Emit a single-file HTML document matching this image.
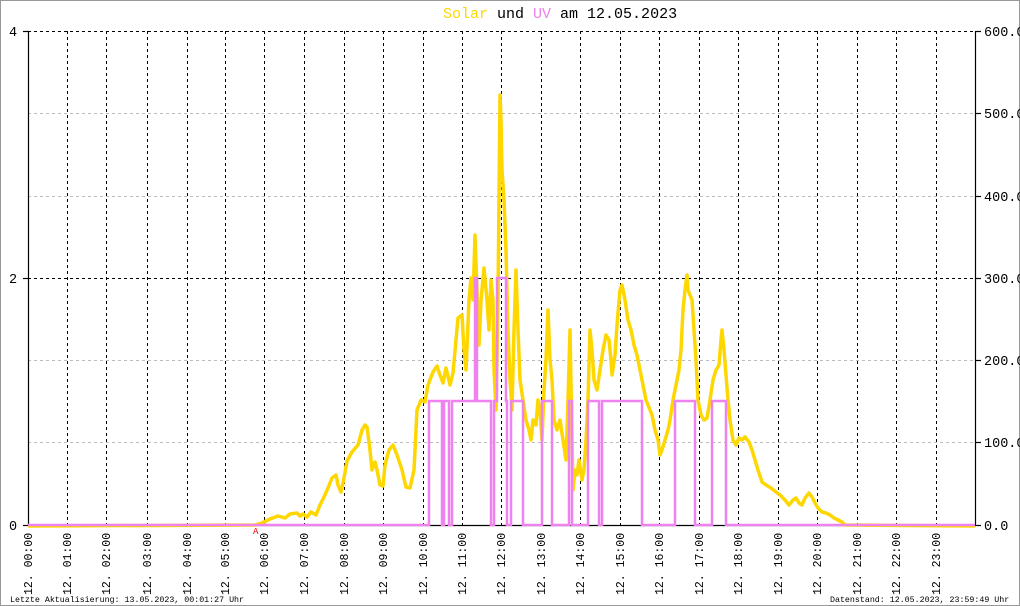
<!DOCTYPE html>
<html><head><meta charset="utf-8"><style>
html,body{margin:0;padding:0;background:#fff;}
svg{display:block;font-family:"Liberation Mono",monospace;}
</style></head><body>
<svg width="1020" height="606" viewBox="0 0 1020 606" xmlns="http://www.w3.org/2000/svg">
<rect x="0.5" y="0.5" width="1019" height="605" fill="#fff" stroke="#999" stroke-width="1"/>
<g stroke="#bbb" stroke-dasharray="3,3" stroke-width="1">
<line x1="28" y1="113.5" x2="975" y2="113.5"/><line x1="28" y1="196.5" x2="975" y2="196.5"/>
<line x1="28" y1="360.5" x2="975" y2="360.5"/><line x1="28" y1="442.5" x2="975" y2="442.5"/>
</g>
<g stroke="#000" stroke-dasharray="3,3" stroke-width="1">
<line x1="28" y1="31.5" x2="975" y2="31.5"/><line x1="28" y1="278.5" x2="975" y2="278.5"/>
<line x1="67.5" y1="31" x2="67.5" y2="525"/><line x1="106.5" y1="31" x2="106.5" y2="525"/><line x1="147.5" y1="31" x2="147.5" y2="525"/><line x1="187.5" y1="31" x2="187.5" y2="525"/><line x1="225.5" y1="31" x2="225.5" y2="525"/><line x1="264.5" y1="31" x2="264.5" y2="525"/><line x1="304.5" y1="31" x2="304.5" y2="525"/><line x1="344.5" y1="31" x2="344.5" y2="525"/><line x1="383.5" y1="31" x2="383.5" y2="525"/><line x1="423.5" y1="31" x2="423.5" y2="525"/><line x1="462.5" y1="31" x2="462.5" y2="525"/><line x1="501.5" y1="31" x2="501.5" y2="525"/><line x1="541.5" y1="31" x2="541.5" y2="525"/><line x1="580.5" y1="31" x2="580.5" y2="525"/><line x1="620.5" y1="31" x2="620.5" y2="525"/><line x1="659.5" y1="31" x2="659.5" y2="525"/><line x1="699.5" y1="31" x2="699.5" y2="525"/><line x1="738.5" y1="31" x2="738.5" y2="525"/><line x1="778.5" y1="31" x2="778.5" y2="525"/><line x1="817.5" y1="31" x2="817.5" y2="525"/><line x1="857.5" y1="31" x2="857.5" y2="525"/><line x1="896.5" y1="31" x2="896.5" y2="525"/><line x1="936.5" y1="31" x2="936.5" y2="525"/>
</g>
<g stroke="#000" stroke-width="1.2">
<line x1="28.5" y1="31" x2="28.5" y2="526"/><line x1="975.5" y1="31" x2="975.5" y2="526"/><line x1="28" y1="525.5" x2="976" y2="525.5"/>
<line x1="23" y1="31.5" x2="29" y2="31.5"/><line x1="23" y1="278.5" x2="29" y2="278.5"/><line x1="23" y1="525.5" x2="29" y2="525.5"/>
<line x1="975" y1="31.5" x2="981" y2="31.5"/><line x1="975" y1="113.5" x2="981" y2="113.5"/><line x1="975" y1="196.5" x2="981" y2="196.5"/><line x1="975" y1="278.5" x2="981" y2="278.5"/><line x1="975" y1="360.5" x2="981" y2="360.5"/><line x1="975" y1="442.5" x2="981" y2="442.5"/><line x1="975" y1="525.5" x2="981" y2="525.5"/>
</g>
<polyline fill="none" stroke="#FFD700" stroke-width="3.5" stroke-linejoin="round" points="28,526 255,525 262,523 270,519 278,516 285,518 290,514 297,513 300,516 303,514 307,517 311,512 316,515 320,505 324,497 328,488 332,478 336,475 338,485 341,492 344,478 347,461 352,452 358,445 362,430 365,425 367,427 370,450 372,470 375,462 377,470 380,485 383,486 385,465 389,450 393,445 397,455 402,470 406,487 410,488 414,470 417,410 421,400 425,402 428,385 433,372 437,366 440,375 443,383 446,368 450,385 453,373 456,340 458,318 462,315 464,350 466,370 469,300 471,278 473,300 475,235 477,290 479,345 481,300 484,268 487,300 489,330 491,280 493,300 494,370 496,410 498,300 500,95 501,120 502,170 504,200 506,250 508,330 510,380 512,410 514,330 516,270 518,330 520,380 523,400 526,420 529,430 531,440 533,420 536,425 538,400 540,410 542,440 544,390 546,360 548,310 550,360 552,380 554,420 557,430 560,420 563,440 566,460 568,400 570,330 572,440 573,490 575,470 577,475 579,460 582,480 584,470 586,440 588,400 590,330 592,350 594,380 597,390 600,370 603,350 606,335 609,340 611,360 612,375 615,355 617,325 620,290 622,285 625,300 628,320 631,330 634,345 637,355 640,370 643,385 646,400 648,405 650,410 652,415 655,430 658,440 660,455 662,450 665,440 668,430 670,420 673,400 676,385 679,370 681,350 683,310 685,290 687,275 688,290 690,295 692,300 694,330 696,360 698,400 701,415 704,420 707,418 710,400 713,380 716,370 719,365 721,340 722,330 724,350 726,375 728,400 730,420 733,440 736,445 739,438 742,440 745,437 749,442 752,450 755,460 758,470 762,482 766,485 771,488 776,492 780,495 785,500 789,505 793,500 796,498 799,503 802,505 805,498 809,493 812,497 815,503 818,508 822,512 826,513 830,515 834,518 838,520 842,522 845,525 975,526"/>
<polyline fill="none" stroke="#EE82EE" stroke-width="2.5" points="28,525 429,525 429,401 442,401 442,525 444,525 444,401 449,401 449,525 452,525 452,401 475,401 475,278 477,278 477,401 491,401 491,525 494,525 494,401 497,401 497,278 506,278 506,401 507,401 507,525 511,525 511,401 523,401 523,525 542,525 542,401 552,401 552,525 569,525 569,401 572,401 572,525 588,525 588,401 599,401 599,525 602,525 602,401 642,401 642,525 675,525 675,401 695,401 695,525 712,525 712,401 726,401 726,525 975,525"/>
<text x="253" y="534" fill="#e00" font-size="9">A</text>
<g font-size="13.5" fill="#000">
<text x="9" y="36">4</text><text x="9" y="283">2</text><text x="9" y="530">0</text>
<text x="984" y="36">600.0</text><text x="984" y="118">500.0</text><text x="984" y="201">400.0</text><text x="984" y="283">300.0</text><text x="984" y="365">200.0</text><text x="984" y="447">100.0</text><text x="984" y="530">0.0</text>
</g>
<text x="443" y="18" font-size="15" fill="#000"><tspan fill="#FFD700">Solar</tspan> und <tspan fill="#EE82EE">UV</tspan> am 12.05.2023</text>
<g font-size="11.5" fill="#000">
<text transform="translate(32,595) rotate(-90)">12. 00:00</text><text transform="translate(71,595) rotate(-90)">12. 01:00</text><text transform="translate(110,595) rotate(-90)">12. 02:00</text><text transform="translate(151,595) rotate(-90)">12. 03:00</text><text transform="translate(191,595) rotate(-90)">12. 04:00</text><text transform="translate(229,595) rotate(-90)">12. 05:00</text><text transform="translate(268,595) rotate(-90)">12. 06:00</text><text transform="translate(308,595) rotate(-90)">12. 07:00</text><text transform="translate(348,595) rotate(-90)">12. 08:00</text><text transform="translate(387,595) rotate(-90)">12. 09:00</text><text transform="translate(427,595) rotate(-90)">12. 10:00</text><text transform="translate(466,595) rotate(-90)">12. 11:00</text><text transform="translate(505,595) rotate(-90)">12. 12:00</text><text transform="translate(545,595) rotate(-90)">12. 13:00</text><text transform="translate(584,595) rotate(-90)">12. 14:00</text><text transform="translate(624,595) rotate(-90)">12. 15:00</text><text transform="translate(663,595) rotate(-90)">12. 16:00</text><text transform="translate(703,595) rotate(-90)">12. 17:00</text><text transform="translate(742,595) rotate(-90)">12. 18:00</text><text transform="translate(782,595) rotate(-90)">12. 19:00</text><text transform="translate(821,595) rotate(-90)">12. 20:00</text><text transform="translate(861,595) rotate(-90)">12. 21:00</text><text transform="translate(900,595) rotate(-90)">12. 22:00</text><text transform="translate(940,595) rotate(-90)">12. 23:00</text>
</g>
<g font-size="8.3" fill="#000">
<text x="10" y="602">Letzte Aktualisierung: 13.05.2023, 00:01:27 Uhr</text>
<text x="830" y="602">Datenstand: 12.05.2023, 23:59:49 Uhr</text>
</g>
</svg>
</body></html>
